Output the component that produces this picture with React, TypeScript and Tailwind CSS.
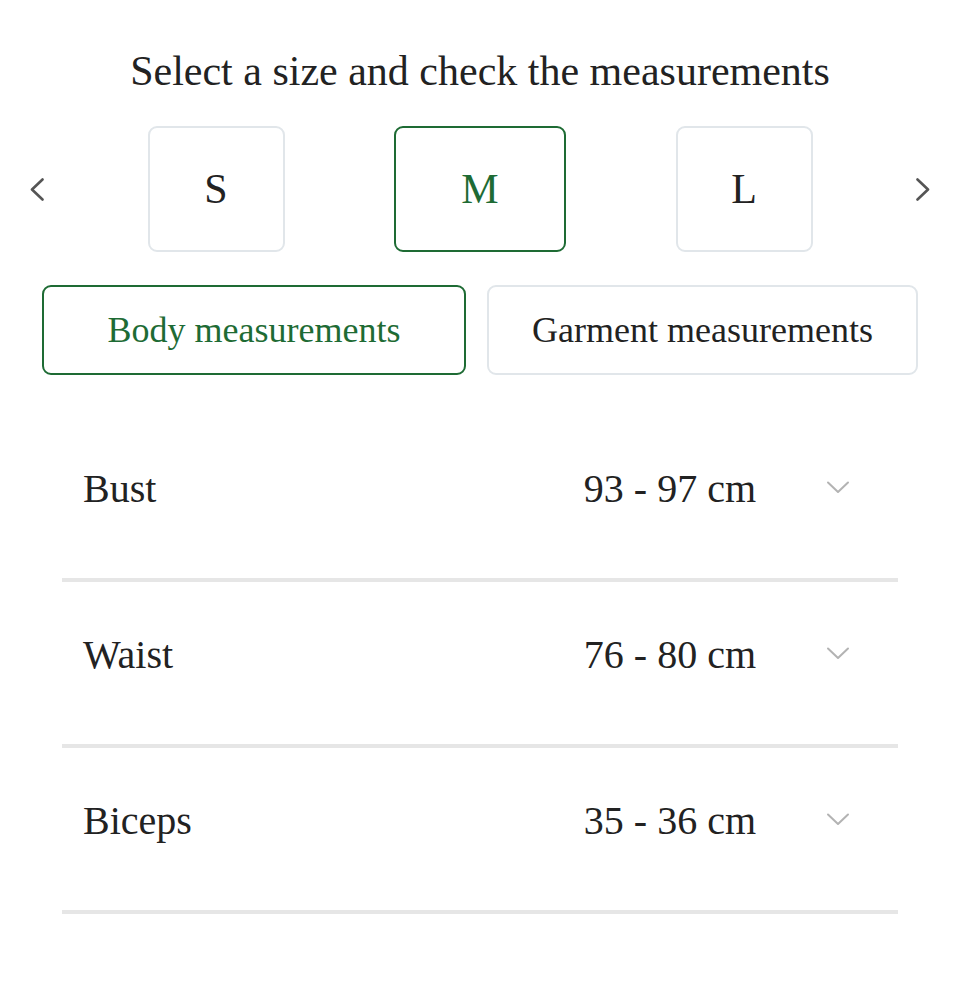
import React, { useState } from "react";

const SERIF = { fontFamily: '"Liberation Serif", "DejaVu Serif", serif' };

const sizes = ["S", "M", "L"];

const rows = [
  { label: "Bust", value: "93 - 97 cm" },
  { label: "Waist", value: "76 - 80 cm" },
  { label: "Biceps", value: "35 - 36 cm" },
];

function NavChevron({ dir }: { dir: "left" | "right" }) {
  return (
    <svg width="14" height="23" viewBox="0 0 14 23" fill="none" aria-hidden>
      <polyline
        points={dir === "left" ? "12.5,1.5 2,11.5 12.5,21.5" : "1.5,1.5 12,11.5 1.5,21.5"}
        stroke="#555555"
        strokeWidth="2.6"
        strokeLinecap="round"
        strokeLinejoin="round"
      />
    </svg>
  );
}

function RowChevron() {
  return (
    <svg width="24" height="13" viewBox="0 0 24 13" fill="none" aria-hidden>
      <polyline
        points="2,1.5 12,11 22,1.5"
        stroke="#b3b3b3"
        strokeWidth="2"
        strokeLinecap="round"
        strokeLinejoin="round"
      />
    </svg>
  );
}

export default function App() {
  const [size, setSize] = useState("M");
  const [tab, setTab] = useState<"body" | "garment">("body");

  return (
    <div className="w-[960px] min-h-[1004px] bg-white text-[#222222]" style={SERIF}>
      <h1 className="pt-[50px] text-center text-[42px] leading-none font-normal">
        Select a size and check the measurements
      </h1>

      {/* size picker */}
      <div className="mt-[34px] flex items-center gap-[10px]">
        <button className="flex h-[126px] w-[74px] items-center justify-center">
          <NavChevron dir="left" />
        </button>
        <div className="grid flex-1 grid-cols-3">
          {sizes.map((s) => {
            const active = s === size;
            return (
              <div key={s} className="flex justify-center">
                <button
                  onClick={() => setSize(s)}
                  className={
                    active
                      ? "flex h-[126px] w-[172px] items-center justify-center rounded-[9px] border-2 border-[#1e6b34] text-[42px] leading-none text-[#1e6b34]"
                      : "flex h-[126px] w-[137px] items-center justify-center rounded-[9px] border-2 border-[#e1e6ea] text-[42px] leading-none text-[#222222]"
                  }
                >
                  {s}
                </button>
              </div>
            );
          })}
        </div>
        <button className="flex h-[126px] w-[74px] items-center justify-center">
          <NavChevron dir="right" />
        </button>
      </div>

      {/* measurement type tabs */}
      <div className="mt-[33px] grid grid-cols-[424px_431px] gap-[21px] px-[42px]">
        <button
          onClick={() => setTab("body")}
          className={
            tab === "body"
              ? "h-[90px] rounded-[9px] border-2 border-[#1e6b34] text-[36px] leading-none text-[#1e6b34]"
              : "h-[90px] rounded-[9px] border-2 border-[#e1e6ea] text-[36px] leading-none text-[#222222]"
          }
        >
          Body measurements
        </button>
        <button
          onClick={() => setTab("garment")}
          className={
            tab === "garment"
              ? "h-[90px] rounded-[9px] border-2 border-[#1e6b34] text-[36px] leading-none text-[#1e6b34]"
              : "h-[90px] rounded-[9px] border-2 border-[#e1e6ea] text-[36px] leading-none text-[#222222]"
          }
        >
          Garment measurements
        </button>
      </div>

      {/* measurement rows */}
      <div className="mx-[62px] mt-[41px]">
        {rows.map((r) => (
          <div key={r.label} className="h-[166px] border-b-4 border-[#e6e6e6] pt-[53px] pl-[21px] pr-[48px]">
            <div className="flex h-[40px] items-center text-[40px] leading-none">
              <span className="flex-1">{r.label}</span>
              <span>{r.value}</span>
              <span className="ml-[70px] flex h-[40px] items-center pb-[4px]">
                <RowChevron />
              </span>
            </div>
          </div>
        ))}
      </div>
    </div>
  );
}
